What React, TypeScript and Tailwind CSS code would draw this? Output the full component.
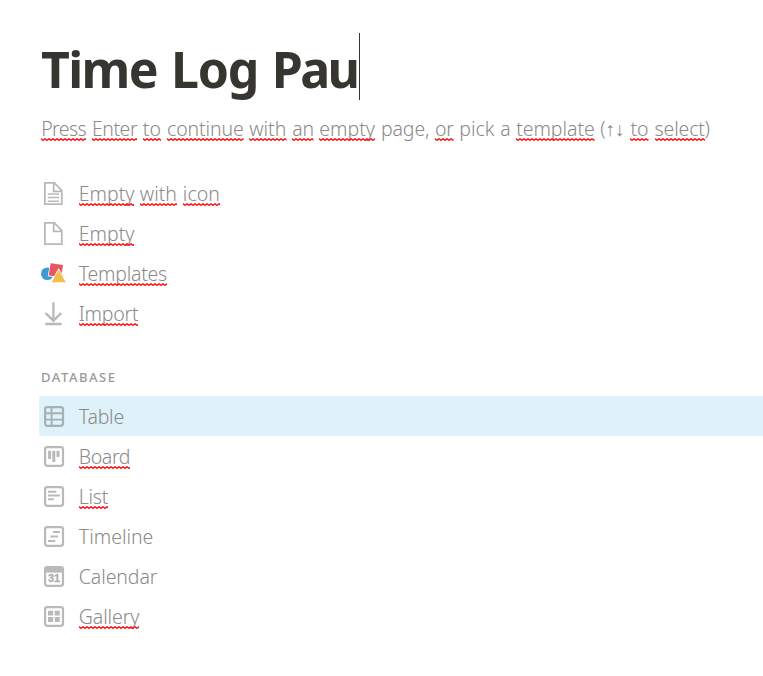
import type { ReactNode } from "react";

type WordDef = { t: string; c: string; u?: boolean; tail?: string };

function Squiggle({ id }: { id: string }) {
  return (
    <svg className="absolute bottom-0 left-0 h-[3px] w-full" aria-hidden="true">
      <defs>
        <pattern id={id} width="4" height="3" patternUnits="userSpaceOnUse">
          <path d="M-1 1.5L0 .8L2 2.3L4 .8L5 1.5" fill="none" stroke="#ff1010" strokeWidth="1.4" />
        </pattern>
      </defs>
      <rect width="100%" height="3" fill={`url(#${id})`} />
    </svg>
  );
}

function Words({ words, id }: { words: WordDef[]; id: string }) {
  return (
    <>
      {words.map((w, i) => (
        <span key={i} className="flex whitespace-nowrap">
          <span className={`relative block h-6 ${w.c}`}>
            {w.t}
            {w.u && <Squiggle id={`${id}-${i}`} />}
          </span>
          {w.tail}
        </span>
      ))}
    </>
  );
}

const hint: WordDef[] = [
  { t: "Press", c: "w-[45.3px] tracking-[-0.6px]", u: true },
  { t: "Enter", c: "w-[45.2px] tracking-[-0.5px]", u: true },
  { t: "to", c: "w-[18.5px]", u: true },
  { t: "continue", c: "w-[76.6px] tracking-[-0.1px]", u: true },
  { t: "with", c: "w-[37.5px]", u: true },
  { t: "an", c: "w-[21.5px] tracking-[-0.3px]", u: true },
  { t: "empty", c: "w-[56px]", u: true },
  { t: "page,", c: "w-[48.6px] tracking-[-0.1px]" },
  { t: "or", c: "w-[18.5px] tracking-[-0.4px]", u: true },
  { t: "pick", c: "w-[35.4px]" },
  { t: "a", c: "w-[10.4px]" },
  { t: "template", c: "w-[78.6px] tracking-[-0.05px]", u: true },
  { t: "(↑↓", c: "w-[24.5px] tracking-[-0.3px]" },
  { t: "to", c: "w-[18.5px]", u: true },
  { t: "select", c: "w-[50px] tracking-[-0.15px]", u: true, tail: ")" },
];

function Row({ icon, words, id, active, db }: { icon: ReactNode; words: WordDef[]; id: string; active?: boolean; db?: boolean }) {
  return (
    <div className={`flex h-10 items-center rounded-l-[3px] pl-px ${active ? "bg-[#dff2fa]" : ""}`}>
      <svg width="28" height="40" viewBox="0 0 28 40" fill="none" stroke={active ? "#a6b1b4" : "#bab9b7"} className="mr-[10.8px] shrink-0">
        {icon}
      </svg>
      <div className={`flex gap-[5.7px] leading-6 ${db ? "pt-[2px]" : ""}`}>
        <Words words={words} id={id} />
      </div>
    </div>
  );
}

const pageOutline = <path d="M4.9 8.9H14.4L21.8 16.6V30.1H4.9ZM13.7 9V17.4H21.8" strokeWidth="1.8" />;
const frame = <rect x="5.1" y="11.1" width="17.9" height="18.7" rx="2.2" strokeWidth="2.2" />;

const emptyIcon = (
  <>
    {pageOutline}
    <path d="M7.8 20H19M7.8 23.6H19M7.8 27.2H19" strokeWidth="1.5" />
  </>
);
const templatesIcon = (
  <g stroke="none">
    <circle cx="7.3" cy="19.8" r="6.3" fill="#3b9bd4" />
    <path d="M10.7 9.3L23 11L21.3 23L8.7 21.6Z" fill="#e8565f" stroke="#fff" strokeWidth="1.6" paintOrder="stroke" />
    <path d="M18.7 15.7L25.8 28.3H11.6Z" fill="#f5bd4f" stroke="#fff" strokeWidth="1.6" paintOrder="stroke" />
  </g>
);
const importIcon = <path d="M13.4 9.2V26.6M6.2 19.6L13.4 26.8L20.6 19.6M6.2 30H20.7" strokeWidth="2.3" strokeLinecap="round" />;
const tableIcon = (
  <>
    {frame}
    <path d="M11.6 11V30M5 17.3H23M5 23.6H23" strokeWidth="1.9" />
  </>
);
const boardIcon = (
  <>
    {frame}
    <path d="M9.6 14.7V23M13.8 14.7V26M18 14.7V21" strokeWidth="3" />
  </>
);
const listIcon = (
  <>
    {frame}
    <path d="M8 15.8H16.4M8 19.5H20M8 23.2H14" strokeWidth="2" />
  </>
);
const timelineIcon = (
  <>
    {frame}
    <path d="M13 16H19.8M10.3 20.6H18M8 25H15.2" strokeWidth="2" />
  </>
);
const calendarIcon = (
  <>
    {frame}
    <path d="M5 13.8H23" strokeWidth="5.6" />
    <text x="14" y="25.6" textAnchor="middle" fill="#b0afad" stroke="#b0afad" strokeWidth=".3" textLength="12.2" lengthAdjust="spacingAndGlyphs" className="font-['Liberation_Sans',sans-serif] text-[10px] font-bold">31</text>
  </>
);
const galleryIcon = (
  <>
    {frame}
    <path d="M8 17.1H13.1M14.7 17.1H19.8M8 23.5H13.1M14.7 23.5H19.8" strokeWidth="4.8" />
  </>
);

export default function App() {
  return (
    <main className="h-[676px] w-[763px] overflow-hidden bg-white pl-[39px] font-['Noto_Sans',sans-serif] text-[19.5px] font-[340] text-[#8b8a87]">
      <div className="flex h-[100px] items-start pl-[2px] pt-[33px]">
        <h1 className="flex h-[67px] w-[318px] items-center whitespace-nowrap pt-[5px] text-[50px] font-[680] leading-[67px] text-[#37352f]">
          <span className="block w-[130px] tracking-[-1.6px]">Time</span>
          <span className="block w-[100.8px] tracking-[-1.2px]">Log</span>
          <span className="block tracking-[-2.7px]">Pau</span>
        </h1>
        <span className="block h-[67px] w-px bg-[#37352f]" />
      </div>
      <p className="flex gap-[5.6px] pl-[2.2px] pt-[17px] leading-6">
        <Words words={hint} id="hint" />
      </p>
      <section className="mt-[33px]">
        <Row id="ei" icon={emptyIcon} words={[{ t: "Empty", c: "w-[55.3px]", u: true }, { t: "with", c: "w-[37.4px]", u: true }, { t: "icon", c: "w-[37.2px]", u: true }]} />
        <Row id="e" icon={pageOutline} words={[{ t: "Empty", c: "w-[55.3px]", u: true }]} />
        <Row id="t" icon={templatesIcon} words={[{ t: "Templates", c: "w-[88.5px] tracking-[-0.25px]", u: true }]} />
        <Row id="i" icon={importIcon} words={[{ t: "Import", c: "w-[59.7px] tracking-[-0.25px]", u: true }]} />
      </section>
      <h2 className="mt-[35px] h-[27px] pl-[2px] text-[13px] font-medium leading-[17px] tracking-[1.55px] text-[#9b9a97]">DATABASE</h2>
      <section>
        <Row db active id="tb" icon={tableIcon} words={[{ t: "Table", c: "tracking-[-0.2px]" }]} />
        <Row db id="b" icon={boardIcon} words={[{ t: "Board", c: "w-[51.7px] tracking-[-0.4px]", u: true }]} />
        <Row db id="l" icon={listIcon} words={[{ t: "List", c: "w-[29.3px] tracking-[-0.3px]", u: true }]} />
        <Row db id="tl" icon={timelineIcon} words={[{ t: "Timeline", c: "" }]} />
        <Row db id="c" icon={calendarIcon} words={[{ t: "Calendar", c: "tracking-[-0.1px]" }]} />
        <Row db id="g" icon={galleryIcon} words={[{ t: "Gallery", c: "w-[60.5px] tracking-[-0.1px]", u: true }]} />
      </section>
    </main>
  );
}
